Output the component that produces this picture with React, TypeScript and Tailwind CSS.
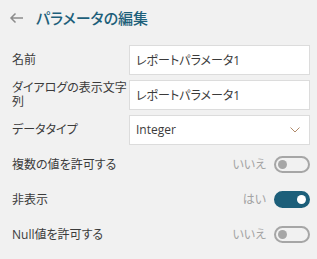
import { useState } from 'react';

type ToggleRowProps = {
  label: string;
  on: boolean;
};

function ToggleRow({ label, on }: ToggleRowProps) {
  const [value, setValue] = useState(on);
  return (
    <div className="flex h-[35px] items-center">
      <span className="flex-1 text-[12px] text-[#3b3b3b]">{label}</span>
      <span className="mr-[8px] text-[12px] text-[#a3a3a3]">{value ? 'はい' : 'いいえ'}</span>
      <button
        type="button"
        onClick={() => setValue(!value)}
        className={`flex h-[17px] w-[36px] items-center rounded-full border-2 px-[2px] ${
          value ? 'justify-end border-[#1d5f7a] bg-[#1d5f7a]' : 'justify-start border-[#a6a6a6] bg-transparent'
        }`}
      >
        <span className={`h-[9px] w-[9px] rounded-full ${value ? 'bg-white' : 'bg-[#a6a6a6]'}`} />
      </button>
    </div>
  );
}

export default function App() {
  return (
    <div className="h-[259px] w-[317px] bg-[#f1f1f1] font-['Open_Sans','Noto_Sans_CJK_JP',sans-serif] [font-feature-settings:'palt']">
      <div className="flex h-[42px] items-center pb-[6px] pl-[9px]">
        <svg width="15" height="12" viewBox="0 0 15 12" fill="none" stroke="#8c8c8c" strokeWidth="1.5">
          <path d="M14 6H2M6.5 1.5L2 6l4.5 4.5" />
        </svg>
        <h1 className="ml-[12px] text-[15px] font-medium text-[#1d5f7a]">パラメータの編集</h1>
      </div>

      <div className="pl-[12px] pr-[7px]">
        <div className="flex h-[35px] items-center">
          <label className="w-[117px] text-[12px] text-[#3b3b3b]">名前</label>
          <input
            defaultValue="レポートパラメータ1"
            className="h-[30px] flex-1 border border-[#dcdcdc] bg-white px-[6px] text-[12px] text-[#3b3b3b] outline-none"
          />
        </div>
        <div className="flex h-[35px] items-center">
          <label className="w-[117px] text-[12px] leading-[14px] text-[#3b3b3b]">ダイアログの表示文字列</label>
          <input
            defaultValue="レポートパラメータ1"
            className="h-[30px] flex-1 border border-[#dcdcdc] bg-white px-[6px] text-[12px] text-[#3b3b3b] outline-none"
          />
        </div>
        <div className="flex h-[35px] items-center">
          <label className="w-[117px] text-[12px] text-[#3b3b3b]">データタイプ</label>
          <div className="flex h-[30px] flex-1 items-center justify-between border border-[#dcdcdc] bg-white pl-[6px] pr-[9px] text-[12px] text-[#3b3b3b]">
            <span>Integer</span>
            <svg width="10" height="6" viewBox="0 0 10 6" fill="none" stroke="#b08a6a" strokeWidth="1">
              <path d="M0.5 0.5L5 5L9.5 0.5" />
            </svg>
          </div>
        </div>

        <ToggleRow label="複数の値を許可する" on={false} />
        <ToggleRow label="非表示" on={true} />
        <ToggleRow label="Null値を許可する" on={false} />
      </div>
    </div>
  );
}
